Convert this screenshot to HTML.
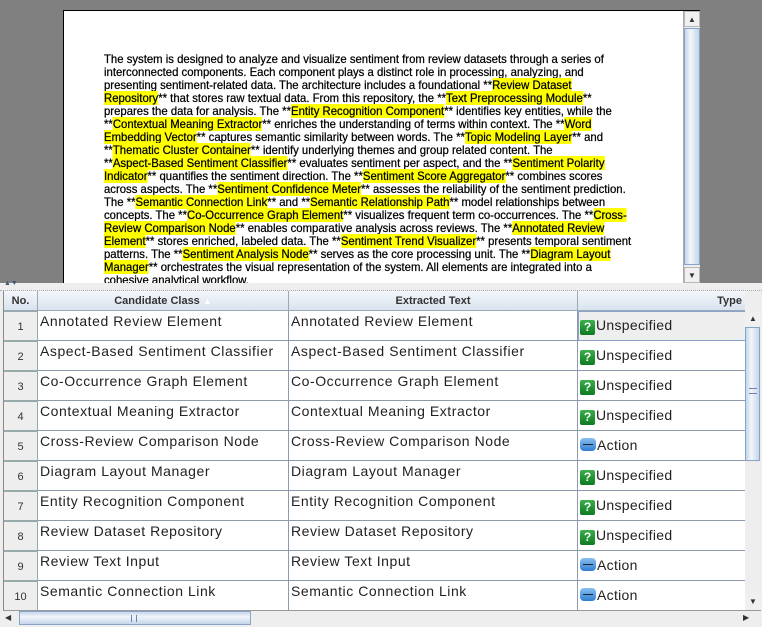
<!DOCTYPE html>
<html><head><meta charset="utf-8"><style>
*{margin:0;padding:0;box-sizing:border-box}
body{width:762px;height:627px;overflow:hidden;background:#eeeeee;font-family:"Liberation Sans",sans-serif;position:relative}
#top{position:absolute;left:0;top:0;width:762px;height:283px;background:#808080}
#page{position:absolute;left:63px;top:10px;width:637px;height:273px;background:#fff;border:1px solid #000;border-bottom:none;overflow:hidden}
.ln{position:absolute;left:40px;white-space:nowrap;font-size:12px;color:#000;transform:scaleX(0.945);transform-origin:0 0;line-height:13px;-webkit-text-stroke:0.25px #000}
.h{background:#ffff00}
#vs1{position:absolute;left:683px;top:11px;width:17px;height:272px;background:#eee;border-left:1px solid #aaa}
.arrowbox{position:absolute;width:16px;height:16px;background:#f0f0f0;border:1px solid #b8b8b8;font-size:8px;text-align:center;line-height:15px;color:#333}
.thumbv{position:absolute;background:linear-gradient(90deg,#c5d6ea,#f2f6fb 40%,#c5d6ea);border:1px solid #8aa3c8}
#div{position:absolute;left:0;top:283px;width:762px;height:8px;background:#eee;border-bottom:1px dotted #aab}
#tbl{position:absolute;left:3px;top:291px;width:742px;height:319px;background:#fff;border-left:1px solid #888;overflow:hidden}
.hd{position:absolute;top:0;height:20px;background:linear-gradient(#f4f7fb,#d9e3ef);border-right:1px solid #9aa8b8;border-bottom:1px solid #9aa8b8;font-size:11px;font-weight:bold;color:#333;line-height:20px;text-align:center}
.row{position:absolute;left:0;height:30px;width:742px;border-bottom:1px solid #8d9aab}
.no{position:absolute;left:0;top:0;width:34px;height:30px;background:#eeeeee;border:1px solid #9aa;border-left:none;font-size:11px;color:#333;text-align:center;line-height:30px}
.c{position:absolute;top:0;height:30px;border-right:1px solid #8d9aab;font-size:14px;color:#222;padding:2px 2px;white-space:nowrap;letter-spacing:0.55px}
.t{position:absolute;top:0;height:30px;left:574px;width:168px;font-size:14px;color:#222;padding-top:6px;padding-left:2px;white-space:nowrap;letter-spacing:0.3px}
.q{display:inline-block;width:15px;height:15px;background:linear-gradient(#3cb04a,#0c7a22);border-radius:2px;color:#fff;font-weight:bold;font-size:12px;text-align:center;line-height:15px;vertical-align:-1px;margin-right:1px;letter-spacing:0}
.a{display:inline-block;width:16px;height:13px;background:linear-gradient(#8ac0f0,#2f7fd0);border-radius:4px;vertical-align:-1px;margin-right:1px;position:relative}
.a:after{content:"";position:absolute;left:3px;right:3px;top:6px;height:1px;background:#123}
#vs2{position:absolute;left:745px;top:311px;width:16px;height:299px;background:#eee}
#hs{position:absolute;left:3px;top:610px;width:758px;height:15px;background:#eee;border-top:1px solid #999}
</style></head><body>
<div id="top"></div>
<div id="page">
<div class="ln" style="top:42px">The system is designed to analyze and visualize sentiment from review datasets through a series of</div>
<div class="ln" style="top:55px">interconnected components. Each component plays a distinct role in processing, analyzing, and</div>
<div class="ln" style="top:68px">presenting sentiment-related data. The architecture includes a foundational **<span class="h">Review Dataset</span></div>
<div class="ln" style="top:81px"><span class="h">Repository</span>** that stores raw textual data. From this repository, the **<span class="h">Text Preprocessing Module</span>**</div>
<div class="ln" style="top:94px">prepares the data for analysis. The **<span class="h">Entity Recognition Component</span>** identifies key entities, while the</div>
<div class="ln" style="top:107px">**<span class="h">Contextual Meaning Extractor</span>** enriches the understanding of terms within context. The **<span class="h">Word</span></div>
<div class="ln" style="top:120px"><span class="h">Embedding Vector</span>** captures semantic similarity between words. The **<span class="h">Topic Modeling Layer</span>** and</div>
<div class="ln" style="top:133px">**<span class="h">Thematic Cluster Container</span>** identify underlying themes and group related content. The</div>
<div class="ln" style="top:146px">**<span class="h">Aspect-Based Sentiment Classifier</span>** evaluates sentiment per aspect, and the **<span class="h">Sentiment Polarity</span></div>
<div class="ln" style="top:159px"><span class="h">Indicator</span>** quantifies the sentiment direction. The **<span class="h">Sentiment Score Aggregator</span>** combines scores</div>
<div class="ln" style="top:172px">across aspects. The **<span class="h">Sentiment Confidence Meter</span>** assesses the reliability of the sentiment prediction.</div>
<div class="ln" style="top:185px">The **<span class="h">Semantic Connection Link</span>** and **<span class="h">Semantic Relationship Path</span>** model relationships between</div>
<div class="ln" style="top:198px">concepts. The **<span class="h">Co-Occurrence Graph Element</span>** visualizes frequent term co-occurrences. The **<span class="h">Cross-</span></div>
<div class="ln" style="top:211px"><span class="h">Review Comparison Node</span>** enables comparative analysis across reviews. The **<span class="h">Annotated Review</span></div>
<div class="ln" style="top:224px"><span class="h">Element</span>** stores enriched, labeled data. The **<span class="h">Sentiment Trend Visualizer</span>** presents temporal sentiment</div>
<div class="ln" style="top:237px">patterns. The **<span class="h">Sentiment Analysis Node</span>** serves as the core processing unit. The **<span class="h">Diagram Layout</span></div>
<div class="ln" style="top:250px"><span class="h">Manager</span>** orchestrates the visual representation of the system. All elements are integrated into a</div>
<div class="ln" style="top:263px">cohesive analytical workflow.</div>
</div>
<div id="vs1">
<div class="arrowbox" style="left:0;top:0">▲</div>
<div class="thumbv" style="left:0;top:17px;width:16px;height:237px"></div>
<div class="arrowbox" style="left:0;top:256px">▼</div>
</div>
<div id="div"><span style="position:absolute;left:4px;top:-3px;font-size:7px;color:#457">▲▼</span></div>
<div id="tbl">
<div class="hd" style="left:0;width:34px">No.</div>
<div class="hd" style="left:34px;width:251px">Candidate Class <span style="color:#fff;font-size:9px">▲</span></div>
<div class="hd" style="left:285px;width:289px">Extracted Text</div>
<div class="hd" style="left:574px;width:168px;text-align:right;padding-right:4px;border-right:none">Type</div>

<div class="row" style="top:20px"><div class="no">1</div><div class="c" style="left:34px;width:251px">Annotated Review Element</div><div class="c" style="left:285px;width:289px">Annotated Review Element</div><div class="t" style="background:#eeeeee;border:1px solid #8aa3c8;padding-top:5px;padding-left:1px"><span class="q">?</span>Unspecified</div></div>
<div class="row" style="top:50px"><div class="no">2</div><div class="c" style="left:34px;width:251px">Aspect-Based Sentiment Classifier</div><div class="c" style="left:285px;width:289px">Aspect-Based Sentiment Classifier</div><div class="t"><span class="q">?</span>Unspecified</div></div>
<div class="row" style="top:80px"><div class="no">3</div><div class="c" style="left:34px;width:251px">Co-Occurrence Graph Element</div><div class="c" style="left:285px;width:289px">Co-Occurrence Graph Element</div><div class="t"><span class="q">?</span>Unspecified</div></div>
<div class="row" style="top:110px"><div class="no">4</div><div class="c" style="left:34px;width:251px">Contextual Meaning Extractor</div><div class="c" style="left:285px;width:289px">Contextual Meaning Extractor</div><div class="t"><span class="q">?</span>Unspecified</div></div>
<div class="row" style="top:140px"><div class="no">5</div><div class="c" style="left:34px;width:251px">Cross-Review Comparison Node</div><div class="c" style="left:285px;width:289px">Cross-Review Comparison Node</div><div class="t"><span class="a"></span>Action</div></div>
<div class="row" style="top:170px"><div class="no">6</div><div class="c" style="left:34px;width:251px">Diagram Layout Manager</div><div class="c" style="left:285px;width:289px">Diagram Layout Manager</div><div class="t"><span class="q">?</span>Unspecified</div></div>
<div class="row" style="top:200px"><div class="no">7</div><div class="c" style="left:34px;width:251px">Entity Recognition Component</div><div class="c" style="left:285px;width:289px">Entity Recognition Component</div><div class="t"><span class="q">?</span>Unspecified</div></div>
<div class="row" style="top:230px"><div class="no">8</div><div class="c" style="left:34px;width:251px">Review Dataset Repository</div><div class="c" style="left:285px;width:289px">Review Dataset Repository</div><div class="t"><span class="q">?</span>Unspecified</div></div>
<div class="row" style="top:260px"><div class="no">9</div><div class="c" style="left:34px;width:251px">Review Text Input</div><div class="c" style="left:285px;width:289px">Review Text Input</div><div class="t"><span class="a"></span>Action</div></div>
<div class="row" style="top:290px"><div class="no">10</div><div class="c" style="left:34px;width:251px">Semantic Connection Link</div><div class="c" style="left:285px;width:289px">Semantic Connection Link</div><div class="t"><span class="a"></span>Action</div></div>
</div>
<div id="vs2">
<div class="arrowbox" style="left:0;top:0;border:none">▲</div>
<div class="thumbv" style="left:0;top:16px;width:15px;height:134px"><div style="position:absolute;left:3px;top:60px;width:8px;height:6px;border-top:1px solid #6a85b0;border-bottom:1px solid #6a85b0"></div></div>
<div class="arrowbox" style="left:0;top:283px;border:none">▼</div>
</div>
<div id="hs">
<div style="position:absolute;left:2px;top:2px;font-size:8px;color:#333">◀</div>
<div style="position:absolute;left:16px;top:0;width:232px;height:14px;background:linear-gradient(#c5d6ea,#f2f6fb 40%,#c5d6ea);border:1px solid #8aa3c8"><div style="position:absolute;left:111px;top:3px;width:6px;height:7px;border-left:1px solid #6a85b0;border-right:1px solid #6a85b0"></div></div>
<div style="position:absolute;left:740px;top:2px;font-size:8px;color:#333">▶</div>
</div>
</body></html>
